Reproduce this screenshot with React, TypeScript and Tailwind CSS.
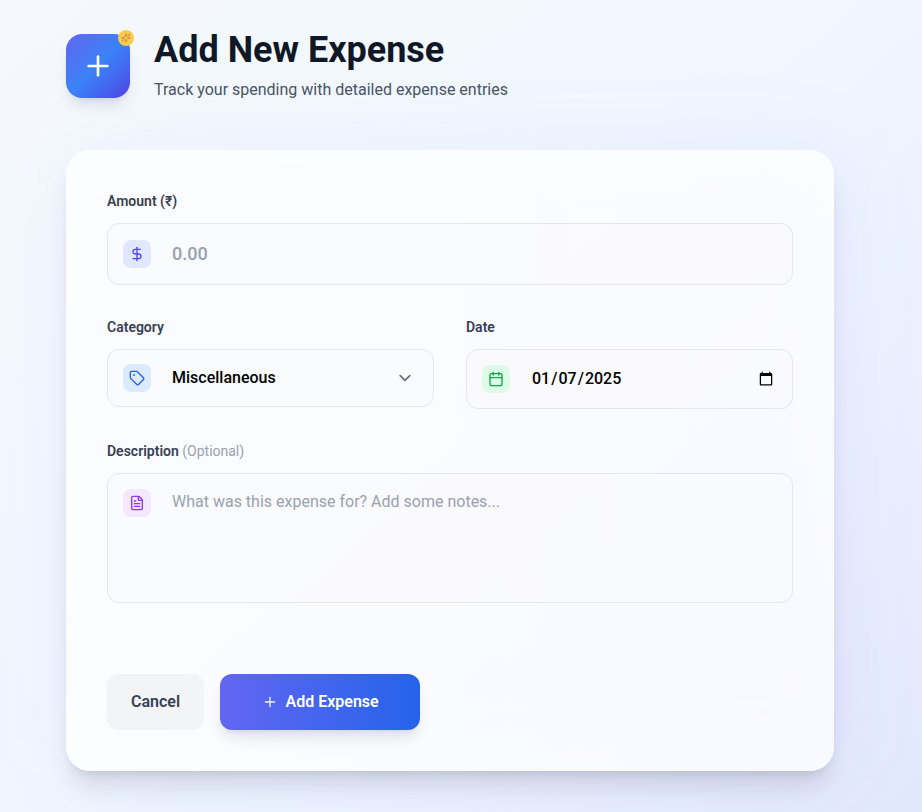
import React, { useState } from "react";
import { Plus, DollarSign, Tag, Calendar, FileText } from "lucide-react";

const field =
  "block w-full rounded-xl border border-gray-200 bg-gray-50/50 py-4 pl-16 pr-4 text-black outline-none";
const label = "mb-3 block text-sm font-semibold text-gray-700";

export default function App() {
  const [date, setDate] = useState("2025-01-07");
  return (
    <div className="relative h-[812px] overflow-hidden bg-linear-to-br/srgb from-[#f5f9fd] via-[#eff6ff] via-50% to-[#e2e8fc] font-['Roboto',sans-serif]">
      <main className="relative ml-[66px] w-[768px] pt-[30px]">
        <header className="mb-12 flex items-center gap-6">
          <div className="relative flex h-16 w-16 items-center justify-center rounded-2xl bg-linear-to-br/srgb from-[#6366f1] via-[#3b82f6] to-[#4f46e5] shadow-lg">
            <Plus className="h-8 w-8 text-white" strokeWidth={2} />
            <div className="absolute -right-1 -top-1 flex h-4 w-4 items-center justify-center rounded-full bg-[#fbcb4d]">
              <svg
                className="h-2.5 w-2.5 text-[#c98a3e]"
                viewBox="0 0 24 24"
                fill="none"
                stroke="currentColor"
                strokeWidth="2"
                strokeLinecap="round"
                strokeLinejoin="round"
              >
                <path d="M9.937 15.5A2 2 0 0 0 8.5 14.063l-6.135-1.582a.5.5 0 0 1 0-.962L8.5 9.936A2 2 0 0 0 9.937 8.5l1.582-6.135a.5.5 0 0 1 .963 0L14.063 8.5A2 2 0 0 0 15.5 9.937l6.135 1.581a.5.5 0 0 1 0 .964L15.5 14.063a2 2 0 0 0-1.437 1.437l-1.582 6.135a.5.5 0 0 1-.963 0z" />
                <path d="M20 3v4M22 5h-4M4 17v2M5 18H3" />
              </svg>
            </div>
          </div>
          <div>
            <h1 className="mb-2 text-4xl font-bold text-gray-900">Add New Expense</h1>
            <p className="text-gray-600">Track your spending with detailed expense entries</p>
          </div>
        </header>

        <div className="relative">
          <div className="absolute inset-0 rounded-3xl bg-linear-to-r/srgb from-[#6366f1]/6 via-[#6366f1]/6 to-[#7c5cf6]/8 blur-2xl" />
          <form className="relative rounded-3xl border border-white/20 bg-white/80 p-10 shadow-xl">
            <div className="mb-8">
              <label className={label}>Amount (₹)</label>
              <div className="relative">
                <span className="absolute left-4 top-[17px] rounded-lg bg-[#e0e7ff] p-1.5">
                  <DollarSign className="h-4 w-4 text-[#4f46e5]" />
                </span>
                <input className={field + " text-lg font-medium placeholder:text-gray-400"} placeholder="0.00" />
              </div>
            </div>

            <div className="mb-8 grid grid-cols-2 gap-8">
              <div>
                <label className={label}>Category</label>
                <div className="relative">
                  <span className="absolute left-4 top-[15px] rounded-lg bg-[#dbeafe] p-1.5">
                    <Tag className="h-4 w-4 text-[#2563eb]" />
                  </span>
                  <select className={field + " appearance-none font-medium"}>
                    <option>Miscellaneous</option>
                  </select>
                  <svg
                    className="pointer-events-none absolute right-[17px] top-[17px] h-6 w-6 text-[#6b7280]"
                    viewBox="0 0 20 20"
                    fill="none"
                    stroke="currentColor"
                    strokeWidth="1.5"
                    strokeLinecap="round"
                    strokeLinejoin="round"
                  >
                    <path d="M6 8l4 4 4-4" />
                  </svg>
                </div>
              </div>
              <div>
                <label className={label}>Date</label>
                <div className="relative">
                  <span className="absolute left-4 top-4 rounded-lg bg-[#dcfce7] p-1.5">
                    <Calendar className="h-4 w-4 text-[#16a34a]" />
                  </span>
                  <input
                    type="date"
                    value={date}
                    onChange={(e) => setDate(e.target.value)}
                    className={field + " h-[60px] font-medium"}
                  />
                </div>
              </div>
            </div>

            <div className="mb-[39px]">
              <label className={label}>
                Description <span className="font-normal text-gray-400">(Optional)</span>
              </label>
              <div className="relative">
                <span className="absolute left-4 top-4 rounded-lg bg-[#f3e8ff] p-1.5">
                  <FileText className="h-4 w-4 text-[#9333ea]" />
                </span>
                <textarea
                  className={field + " h-[130px] resize-none placeholder:text-gray-400"}
                  placeholder="What was this expense for? Add some notes..."
                />
              </div>
            </div>

            <div className="flex gap-4 pt-8">
              <button type="button" className="rounded-xl bg-gray-100 px-6 py-4 font-semibold text-gray-700">
                Cancel
              </button>
              <button
                type="button"
                className="flex w-[200px] items-center justify-center gap-2 rounded-xl bg-linear-to-r/srgb from-[#6366f1] to-[#2563eb] py-4 font-semibold text-white shadow-lg"
              >
                <Plus className="h-4 w-4 text-white/90" strokeWidth={2} />
                Add Expense
              </button>
            </div>
          </form>
        </div>
      </main>
    </div>
  );
}
